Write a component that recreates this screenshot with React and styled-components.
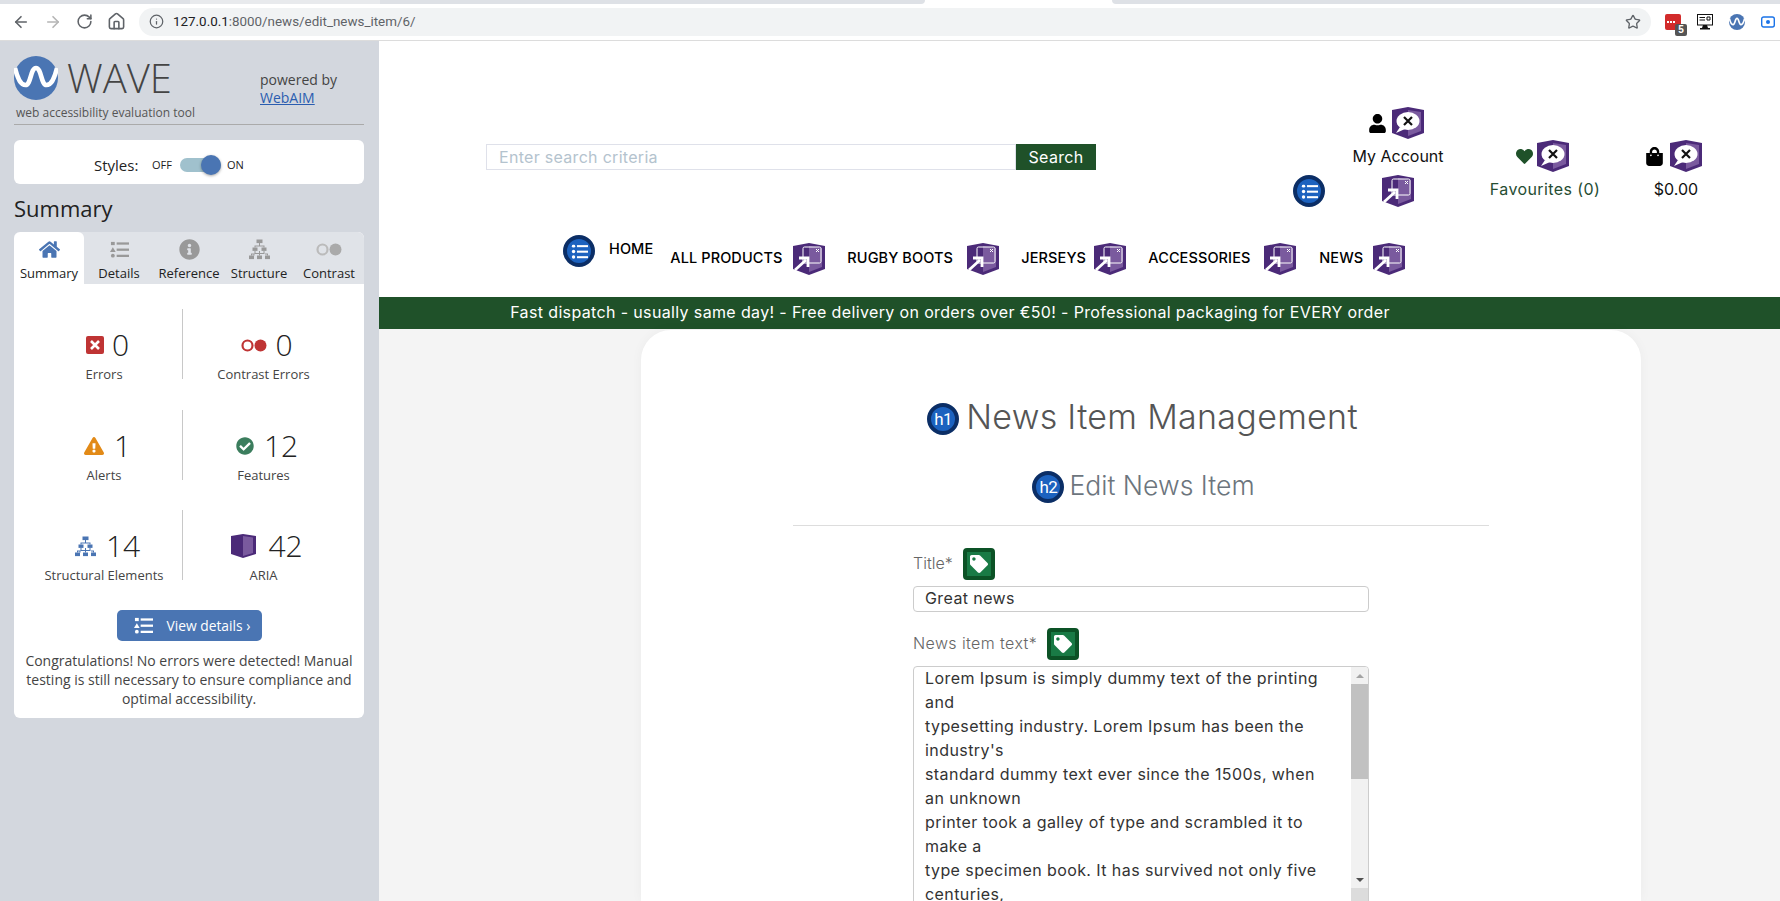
import React from 'react';
import styled, { createGlobalStyle } from 'styled-components';
import { ArrowLeft, ArrowRight, RotateCw, Home, Info, Star } from 'lucide-react';
import { FaHome, FaInfoCircle, FaCheckCircle, FaExclamationTriangle, FaUser, FaHeart, FaShoppingBag, FaTag } from 'react-icons/fa';

const SITE_FONT = `Inter, "Open Sans", sans-serif`;
const WAVE_FONT = `"Open Sans", "Noto Sans", sans-serif`;

const GlobalStyle = createGlobalStyle`
  html, body { margin: 0; padding: 0; height: 100%; overflow: hidden; background: #fff; }
  * { box-sizing: border-box; }
`;

const Root = styled.div`
  height: 901px;
  width: 1780px;
  overflow: hidden;
  display: flex;
  flex-direction: column;
`;

/* browser chrome */
const TabStrip = styled.div`
  height: 4px;
  display: flex;
  flex: none;
`;
const TabPiece = styled.div`
  height: 4px;
  width: ${p => p.$w}px;
  flex: ${p => (p.$grow ? 1 : 'none')};
  background: ${p => p.$bg};
  border-radius: ${p => p.$radius || '0'};
`;
const Toolbar = styled.div`
  height: 37px;
  flex: none;
  display: flex;
  align-items: center;
  padding: 4px 0 5px 12px;
  border-bottom: 1px solid #dcdcdc;
  background: #fff;
`;
const NavIcons = styled.div`
  display: flex;
  align-items: center;
  gap: 14px;
  color: #5f6368;
  width: 127px;
  flex: none;
`;
const AddressBar = styled.div`
  width: 1512px;
  height: 28px;
  flex: none;
  background: #f1f3f4;
  border-radius: 14px;
  display: flex;
  align-items: center;
  padding: 0 10px 0 10px;
  color: #5f6368;
`;
const Url = styled.span`
  font: 13.4px Roboto, sans-serif;
  margin-left: 9px;
  color: #5f6368;
  flex: 1;
  b { font-weight: 400; color: #202124; }
`;
const Extensions = styled.div`
  display: flex;
  align-items: center;
  margin-left: 14px;
  gap: 16px;
`;
const RedExt = styled.div`
  width: 16px;
  height: 16px;
  background: #d22b2b;
  border-radius: 2px;
  position: relative;
  display: flex;
  gap: 1px;
  align-items: center;
  padding-left: 2px;
  i { width: 2px; height: 2px; background: #fff; display: block; }
`;
const ExtBadge = styled.span`
  position: absolute;
  left: 10px;
  top: 10px;
  width: 12px;
  height: 12px;
  background: #555;
  color: #fff;
  border-radius: 2px;
  font: bold 10px/12px "Liberation Sans", sans-serif;
  text-align: center;
`;

const Page = styled.div`
  flex: 1;
  display: flex;
  min-height: 0;
`;

/* WAVE sidebar */
const Sidebar = styled.aside`
  width: 379px;
  flex: none;
  background: #d3d7de;
  padding: 15px 15px 0 14px;
  font-family: ${WAVE_FONT};
  color: #444;
`;
const Brand = styled.div`
  display: flex;
  height: 69px;
  border-bottom: 1px solid #aaa;
`;
const LogoWrap = styled.div`
  width: 246px;
  flex: none;
`;
const LogoRow = styled.div`
  display: flex;
  align-items: center;
  gap: 9px;
  height: 44px;
`;
const LogoWord = styled.span`
  font: 300 40px/44px ${WAVE_FONT};
  color: #444;
`;
const Tagline = styled.div`
  font-size: 12px;
  line-height: 16px;
  margin: 5px 0 0 2px;
  color: #555;
  white-space: nowrap;
`;
const Powered = styled.div`
  font-size: 14px;
  line-height: 19px;
  padding-top: 14px;
  color: #444;
  a { color: #2a5db0; display: block; line-height: 18px; text-decoration: underline; }
`;
const StylesCard = styled.div`
  margin-top: 15px;
  height: 44px;
  background: #fff;
  border-radius: 6px;
  display: flex;
  align-items: center;
  padding: 5px 0 0 80px;
  color: #222;
`;
const StylesLabel = styled.span`
  font-size: 15px;
  width: 58px;
`;
const OnOff = styled.span`
  font-size: 11px;
`;
const Toggle = styled.div`
  width: 41px;
  height: 14px;
  margin: 0 6px 0 8px;
  border-radius: 7px;
  background: #a0c1cd;
  display: flex;
  align-items: center;
  justify-content: flex-end;
  &::after {
    content: '';
    width: 20px;
    height: 20px;
    flex: none;
    border-radius: 50%;
    background: #4a75b3;
    box-shadow: 0 1px 3px rgba(0, 0, 0, 0.35);
  }
`;
const SummaryTitle = styled.h2`
  margin: 9px 0 9px;
  font: 400 22px/30px ${WAVE_FONT};
  color: #222;
`;
const Panel = styled.div`
  border-radius: 6px;
  background: #fff;
  overflow: hidden;
`;
const Tabs = styled.div`
  display: grid;
  grid-template-columns: repeat(5, 70px);
  background: #e0e3e8;
  height: 52px;
`;
const Tab = styled.div`
  display: flex;
  flex-direction: column;
  align-items: center;
  background: ${p => (p.$active ? '#fff' : 'transparent')};
  border-radius: ${p => (p.$active ? '6px 6px 0 0' : '0')};
  color: ${p => (p.$active ? '#4a75b3' : '#999')};
  font-size: 13px;
  height: 52px;
`;
const TabIcon = styled.div`
  height: 33px;
  display: flex;
  align-items: center;
  justify-content: center;
  padding-top: 2px;
`;
const TabLabel = styled.span`
  color: #222;
  line-height: 16px;
  white-space: nowrap;
`;
const Stats = styled.div`
  display: grid;
  grid-template-columns: 168px 182px;
  padding: 25px 0 0;
  row-gap: 30.5px;
`;
const Stat = styled.div`
  height: 70px;
  display: flex;
  flex-direction: column;
  align-items: center;
  justify-content: flex-start;
  border-left: ${p => (p.$divided ? '1px solid #c8c8c8' : 'none')};
  padding: 17px ${p => (p.$divided ? 20 : 0)}px 0 ${p => (p.$divided ? 0 : 12)}px;
`;
const StatTop = styled.div`
  display: flex;
  align-items: center;
  gap: ${p => p.$gap || 8}px;
  height: 38px;
  margin-left: 7px;
`;
const StatNum = styled.span`
  font: 300 30px/38px ${WAVE_FONT};
  color: #222;
`;
const StatLabel = styled.div`
  font-size: 13px;
  line-height: 20px;
  color: #444;
  white-space: nowrap;
`;
const ViewRow = styled.div`
  display: flex;
  justify-content: center;
  margin-top: 30px;
`;
const ViewButton = styled.div`
  width: 145px;
  height: 31px;
  background: #4a75b3;
  border-radius: 5px;
  color: #fff;
  font-size: 13.8px;
  display: flex;
  align-items: center;
  gap: 14px;
  padding-left: 17px;
`;
const Congrats = styled.p`
  margin: 10px 0 0;
  padding: 0 8px 10px;
  font-size: 14px;
  line-height: 19px;
  text-align: center;
  color: #444;
`;

/* site */
const Main = styled.main`
  flex: 1;
  min-width: 0;
  display: flex;
  flex-direction: column;
  font-family: ${SITE_FONT};
  background: #f4f4f4;
`;
const Header = styled.header`
  height: 256px;
  flex: none;
  background: #fff;
  display: flex;
  flex-direction: column;
`;
const TopRow = styled.div`
  height: 194px;
  display: flex;
  padding: 66px 0 0 107px;
`;
const SearchForm = styled.div`
  display: flex;
  width: 610px;
  height: 26px;
  margin-top: 37px;
  margin-right: 197px;
  flex: none;
`;
const SearchInput = styled.div`
  width: 530px;
  border: 1px solid #dfe1ea;
  padding-left: 12px;
  font-size: 16px;
  letter-spacing: 0.3px;
  line-height: 24px;
  color: #b4c3ce;
`;
const SearchBtn = styled.div`
  width: 80px;
  background: #1f5129;
  color: #fff;
  font-size: 16px;
  letter-spacing: 0.3px;
  line-height: 26px;
  text-align: center;
`;
const AccountCol = styled.div`
  width: 210px;
  flex: none;
  display: flex;
  flex-direction: column;
  align-items: center;
`;
const IconRow = styled.div`
  display: flex;
  align-items: center;
  gap: ${p => p.$gap}px;
  height: 32px;
  margin-right: ${p => p.$mr}px;
`;
const HeadText = styled.div`
  font-size: 16px;
  letter-spacing: ${p => p.$spacing || 0}px;
  line-height: 21px;
  margin-top: 7px;
  color: ${p => p.$color || '#111'};
  white-space: nowrap;
`;
const AccountBottom = styled.div`
  width: 100%;
  display: grid;
  grid-template-columns: 1fr 32px 1fr;
  margin-top: 8px;
`;
const MiniCol = styled.div`
  width: ${p => p.$w}px;
  margin-left: ${p => p.$ml || 0}px;
  padding-top: 33px;
  display: flex;
  flex-direction: column;
  align-items: center;
  flex: none;
`;
const NavRow = styled.nav`
  display: flex;
  align-items: flex-start;
  padding-left: 184px;
`;
const NavItem = styled.div`
  display: flex;
  align-items: center;
  margin-top: ${p => (p.$raised ? 0 : 8)}px;
  margin-right: ${p => p.$mr}px;
  height: 32px;
`;
const NavLabel = styled.span`
  font-size: 14.5px;
  font-weight: 500;
  color: #000;
  white-space: nowrap;
  width: ${p => (p.$w ? `${p.$w}px` : 'auto')};
  margin-left: ${p => p.$ml || 0}px;
  padding-bottom: ${p => (p.$ml ? 6 : 4)}px;
  letter-spacing: 0.1px;
`;
const Banner = styled.div`
  height: 32px;
  flex: none;
  background: #1f5129;
  color: #fff;
  font-size: 16px;
  letter-spacing: 0.36px;
  line-height: 30px;
  text-align: center;
  padding-right: 259px;
`;
const Content = styled.div`
  flex: 1;
  display: flex;
  min-height: 0;
  padding: 1px 0 0 262px;
`;
const Card = styled.section`
  width: 1000px;
  flex: none;
  background: #fff;
  border-radius: 30px 30px 0 0;
  box-shadow: 0 0 12px rgba(0, 0, 0, 0.04);
  padding-top: 73px;
  display: flex;
  flex-direction: column;
  align-items: center;
`;
const Heading = styled.div`
  display: flex;
  align-items: center;
  gap: ${p => p.$gap}px;
  height: 32px;
  color: ${p => p.$color};
  font-weight: 300;
  font-size: ${p => p.$size}px;
  letter-spacing: ${p => p.$spacing || 0}px;
  margin-top: ${p => p.$mt || 0}px;
  margin-left: ${p => p.$ml || 0}px;
  white-space: nowrap;
`;
const HeadingText = styled.span`
  padding-bottom: ${p => p.$lift}px;
`;
const CardRule = styled.hr`
  width: 696px;
  margin: 22px 0 0;
  border: 0;
  border-top: 1px solid #ddd;
  flex: none;
`;
const Form = styled.div`
  width: 456px;
  margin-top: 22px;
  display: flex;
  flex-direction: column;
  align-self: flex-start;
  margin-left: 272px;
`;
const LabelRow = styled.div`
  display: flex;
  align-items: center;
  gap: 10px;
  height: 32px;
  font-size: 16px;
  letter-spacing: ${p => p.$spacing || 0}px;
  color: #666;
  font-weight: 300;
`;
const LabelText = styled.span`
  padding-bottom: 2px;
`;
const TitleInput = styled.div`
  height: 26px;
  margin: 6px 0 16px;
  border: 1px solid #ccc;
  border-radius: 4px;
  padding-left: 11px;
  font-size: 16px;
  letter-spacing: 0.4px;
  line-height: 22px;
  color: #333;
`;
const TextBox = styled.div`
  height: 240px;
  margin-top: 6px;
  border: 1px solid #ccc;
  border-radius: 4px;
  display: flex;
  overflow: hidden;
  flex: none;
`;
const TextBody = styled.div`
  flex: 1;
  margin-top: -1px;
  padding-left: 11px;
  font-size: 16px;
  letter-spacing: 0.42px;
  line-height: 24px;
  color: #333;
  white-space: nowrap;
`;
const Scrollbar = styled.div`
  width: 17px;
  flex: none;
  background: #f1f1f1;
  display: flex;
  flex-direction: column;
  align-items: center;
`;
const ScrollArrow = styled.div`
  height: 17px;
  flex: none;
  width: 100%;
  display: flex;
  align-items: center;
  justify-content: center;
  &::after {
    content: '';
    border-left: 4px solid transparent;
    border-right: 4px solid transparent;
    border-${p => (p.$up ? 'bottom' : 'top')}: 4px solid ${p => (p.$up ? '#a3a3a3' : '#505050')};
  }
`;
const ScrollThumb = styled.div`
  width: 100%;
  height: 95px;
  flex: none;
  background: #c1c1c1;
`;
const ScrollGap = styled.div`
  flex: 1;
`;
const ResizeCorner = styled.div`
  height: 17px;
  width: 100%;
  flex: none;
  background: #dcdcdc;
`;

/* badges */
const RoundBadge = styled.div`
  width: 32px;
  height: 32px;
  border-radius: 50%;
  background: #1c62bf;
  border: 4px solid #0b2e66;
  flex: none;
  display: flex;
  align-items: center;
  justify-content: center;
  color: #fff;
  font: 400 17px/1 Roboto, sans-serif;
  letter-spacing: -0.5px;
`;
const TagBadge = styled.div`
  width: 32px;
  height: 32px;
  border-radius: 4px;
  background: #197a45;
  border: 4px solid #0c5226;
  flex: none;
  display: flex;
  align-items: center;
  justify-content: center;
  color: #fff;
`;

const AriaBadge = ({ kind }) => (
  <svg width="32" height="32" viewBox="0 0 32 32" style={{ flex: 'none' }}>
    <path d="M0 3 L16 0 L32 3 L32 26 L16 32 L0 26 Z" fill="#4b2a78" />
    <path d="M16 3 L29 5 L29 24 L16 29 Z" fill="#7a5a9e" />
    {kind === 'label' ? (
      <>
        <ellipse cx="16" cy="14" rx="11.5" ry="9" fill="#fff" />
        <path d="M8 20 L4 26 L13 22 Z" fill="#fff" />
        <path d="M12 10 L20 18 M20 10 L12 18" stroke="#111" strokeWidth="2.2" />
      </>
    ) : (
      <>
        <rect x="10" y="4" width="18" height="16" rx="1.5" fill="none" stroke="#fff" strokeWidth="1" />
        <path d="M23 6 L26 9 M26 6 L23 9" stroke="#fff" strokeWidth="1" />
        <path d="M2 27 L13 17 M6 15 H15 V24" fill="none" stroke="#fff" strokeWidth="2.8" />
      </>
    )}
  </svg>
);

const ListGlyph = ({ size = 20, color = '#fff', triangle }) => (
  <svg width={size} height={size} viewBox="0 0 20 20" fill={color}>
    {triangle ? <path d="M3 7.5 L6 12.5 H0 Z" /> : <circle cx="3" cy="10" r="2" />}
    <rect x="1" y="2" width="4" height="3.4" rx={triangle ? 0 : 1.7} />
    <circle cx="3" cy="16.5" r="2" />
    <rect x="7" y="2.5" width="13" height="2.4" />
    <rect x="7" y="9" width="13" height="2.4" />
    <rect x="7" y="15.5" width="13" height="2.4" />
  </svg>
);

const TreeGlyph = ({ color, size = 21 }) => (
  <svg width={size} height={size} viewBox="0 0 21 20" fill={color}>
    <rect x="7.5" y="0" width="6" height="3.6" />
    <rect x="3.5" y="8" width="5" height="3.4" />
    <rect x="12.5" y="8" width="5" height="3.4" />
    <rect x="0" y="16" width="5" height="3.6" />
    <rect x="8" y="16" width="5" height="3.6" />
    <rect x="16" y="16" width="5" height="3.6" />
    <path d="M10 3.6 h1 V6 H15.5 V8 h-1 V7 H6.5 V8 h-1 V6 H10Z M5.5 11.4 h1 V13.5 H10 V11.4 h1 V13.5 H14.5 V11.4 h1 V14.5 H11 V16 h-1 V14.5 H5.5 V16 h-1 V14 H5.5Z M2 14 h3 v1 H3 v1 H2Z M16 14 h3 v2 h-1 v-1 h-2Z" />
  </svg>
);

const ContrastGlyph = ({ ring, fill, w = 26 }) => (
  <svg width={w} height={w * 0.5} viewBox="0 0 26 13">
    <circle cx="6.5" cy="6.5" r="5" fill="none" stroke={ring} strokeWidth="2.2" />
    <circle cx="19.5" cy="6.5" r="6" fill={fill} />
  </svg>
);

const WaveLogo = ({ size = 44 }) => (
  <svg width={size} height={size} viewBox="0 0 44 44" style={{ flex: 'none' }}>
    <circle cx="22" cy="22" r="22" fill="#4a75b3" />
    <path
      d="M1 12 C4 24 7 29 11.5 29 C17 29 16.5 12 22 12 C27.5 12 27 29 32.5 29 C37 29 40 24 43 12"
      fill="none"
      stroke="#fff"
      strokeWidth="4.6"
    />
  </svg>
);

const loremLines = [
  'Lorem Ipsum is simply dummy text of the printing',
  'and',
  'typesetting industry. Lorem Ipsum has been the',
  "industry's",
  'standard dummy text ever since the 1500s, when',
  'an unknown',
  'printer took a galley of type and scrambled it to',
  'make a',
  'type specimen book. It has survived not only five',
  'centuries,',
];

const navItems = [
  { label: 'ALL PRODUCTS', w: 123, mr: 22 },
  { label: 'RUGBY BOOTS', w: 120, mr: 22 },
  { label: 'JERSEYS', w: 73, mr: 22 },
  { label: 'ACCESSORIES', w: 116, mr: 23 },
  { label: 'NEWS', w: 54, mr: 0 },
];

const tabs = [
  { label: 'Summary', icon: <FaHome size={21} />, active: true },
  { label: 'Details', icon: <ListGlyph size={19} color="#999" triangle /> },
  { label: 'Reference', icon: <FaInfoCircle size={21} /> },
  { label: 'Structure', icon: <TreeGlyph color="#999" /> },
  { label: 'Contrast', icon: <ContrastGlyph ring="#bbb" fill="#aaa" /> },
];

function App() {
  return (
    <Root>
      <GlobalStyle />
      <TabStrip>
        <TabPiece $w={190} $bg="#dee1e6" />
        <TabPiece $w={190} $bg="#e8eaed" />
        <TabPiece $w={545} $bg="#dee1e6" $radius="0 0 6px 0" />
        <TabPiece $w={187} $bg="#fff" />
        <TabPiece $grow $bg="#dee1e6" $radius="0 0 0 6px" />
      </TabStrip>
      <Toolbar>
        <NavIcons>
          <ArrowLeft size={18} strokeWidth={2.2} />
          <ArrowRight size={18} strokeWidth={2.2} color="#b5b5b5" />
          <RotateCw size={17} strokeWidth={2.2} />
          <Home size={19} strokeWidth={2} />
        </NavIcons>
        <AddressBar>
          <Info size={15} />
          <Url><b>127.0.0.1</b>:8000/news/edit_news_item/6/</Url>
          <Star size={16} />
        </AddressBar>
        <Extensions>
          <RedExt><i /><i /><i /><ExtBadge>5</ExtBadge></RedExt>
          <svg width="16" height="16" viewBox="0 0 16 16">
            <rect x="0.5" y="0.5" width="15" height="10.5" fill="#fff" stroke="#111" />
            <path d="M2.5 3.5 H8 M2.5 6 H8 M10 3 H13 V6 H10Z" stroke="#111" fill="none" />
            <path d="M6 11 H10 L11 14 H13 V15.5 H3 V14 H5Z" fill="#111" />
          </svg>
          <WaveLogo size={16} />
          <svg width="14" height="12" viewBox="0 0 14 12">
            <rect x="0.7" y="1" width="12.6" height="10" rx="2" fill="none" stroke="#1a73e8" strokeWidth="1.4" />
            <circle cx="7" cy="6" r="2" fill="#1a73e8" />
          </svg>
        </Extensions>
      </Toolbar>
      <Page>
        <Sidebar>
          <Brand>
            <LogoWrap>
              <LogoRow>
                <WaveLogo />
                <LogoWord>WAVE</LogoWord>
              </LogoRow>
              <Tagline>web accessibility evaluation tool</Tagline>
            </LogoWrap>
            <Powered>
              powered by
              <a href="#webaim">WebAIM</a>
            </Powered>
          </Brand>
          <StylesCard>
            <StylesLabel>Styles:</StylesLabel>
            <OnOff>OFF</OnOff>
            <Toggle />
            <OnOff>ON</OnOff>
          </StylesCard>
          <SummaryTitle>Summary</SummaryTitle>
          <Panel>
            <Tabs>
              {tabs.map(t => (
                <Tab key={t.label} $active={t.active}>
                  <TabIcon>{t.icon}</TabIcon>
                  <TabLabel>{t.label}</TabLabel>
                </Tab>
              ))}
            </Tabs>
            <Stats>
              <Stat>
                <StatTop>
                  <svg width="18" height="18" viewBox="0 0 18 18">
                    <rect width="18" height="18" rx="2" fill="#bf3434" />
                    <path d="M5 5 L13 13 M13 5 L5 13" stroke="#fff" strokeWidth="2.6" />
                  </svg>
                  <StatNum>0</StatNum>
                </StatTop>
                <StatLabel>Errors</StatLabel>
              </Stat>
              <Stat $divided>
                <StatTop>
                  <ContrastGlyph ring="#bf3434" fill="#bf3434" />
                  <StatNum>0</StatNum>
                </StatTop>
                <StatLabel>Contrast Errors</StatLabel>
              </Stat>
              <Stat>
                <StatTop $gap={10}>
                  <FaExclamationTriangle size={20} color="#e28a17" />
                  <StatNum>1</StatNum>
                </StatTop>
                <StatLabel>Alerts</StatLabel>
              </Stat>
              <Stat $divided>
                <StatTop $gap={10}>
                  <FaCheckCircle size={18} color="#3b7d5d" />
                  <StatNum>12</StatNum>
                </StatTop>
                <StatLabel>Features</StatLabel>
              </Stat>
              <Stat>
                <StatTop $gap={10}>
                  <TreeGlyph color="#4a75b3" />
                  <StatNum>14</StatNum>
                </StatTop>
                <StatLabel>Structural Elements</StatLabel>
              </Stat>
              <Stat $divided>
                <StatTop $gap={12}>
                  <svg width="25" height="24" viewBox="0 0 25 24">
                    <path d="M0 2 L12 0 L25 2 L25 20 L12 24 L0 20 Z" fill="#4b2a78" />
                    <path d="M12 2 L22 3.5 L22 19 L12 22 Z" fill="#7a5a9e" />
                  </svg>
                  <StatNum>42</StatNum>
                </StatTop>
                <StatLabel>ARIA</StatLabel>
              </Stat>
            </Stats>
            <ViewRow>
              <ViewButton>
                <ListGlyph size={19} triangle />
                View details ›
              </ViewButton>
            </ViewRow>
            <Congrats>
              Congratulations! No errors were detected! Manual testing is still necessary to ensure compliance and optimal accessibility.
            </Congrats>
          </Panel>
        </Sidebar>
        <Main>
          <Header>
            <TopRow>
              <SearchForm>
                <SearchInput>Enter search criteria</SearchInput>
                <SearchBtn>Search</SearchBtn>
              </SearchForm>
              <AccountCol>
                <IconRow $gap={5} $mr={4}>
                  <FaUser size={19} color="#000" />
                  <AriaBadge kind="label" />
                </IconRow>
                <HeadText>My Account</HeadText>
                <AccountBottom>
                  <RoundBadge><ListGlyph size={17} /></RoundBadge>
                  <AriaBadge kind="popup" />
                </AccountBottom>
              </AccountCol>
              <MiniCol $w={110} $ml={-13}>
                <IconRow $gap={4} $mr={5}>
                  <FaHeart size={17} color="#1f5129" />
                  <AriaBadge kind="label" />
                </IconRow>
                <HeadText $color="#264d33" $spacing={0.4}>Favourites (0)</HeadText>
              </MiniCol>
              <MiniCol $w={152}>
                <IconRow $gap={6} $mr={5}>
                  <FaShoppingBag size={19} color="#000" />
                  <AriaBadge kind="label" />
                </IconRow>
                <HeadText>$0.00</HeadText>
              </MiniCol>
            </TopRow>
            <NavRow>
              <NavItem $raised $mr={17}>
                <RoundBadge><ListGlyph size={17} /></RoundBadge>
                <NavLabel $ml={14}>HOME</NavLabel>
              </NavItem>
              {navItems.map(n => (
                <NavItem key={n.label} $mr={n.mr}>
                  <NavLabel $w={n.w}>{n.label}</NavLabel>
                  <AriaBadge kind="popup" />
                </NavItem>
              ))}
            </NavRow>
          </Header>
          <Banner>Fast dispatch - usually same day! - Free delivery on orders over €50! - Professional packaging for EVERY order</Banner>
          <Content>
            <Card>
              <Heading $color="#555" $size={34} $spacing={0.3} $gap={7} $ml={3}>
                <RoundBadge>h1</RoundBadge>
                <HeadingText $lift={6}>News Item Management</HeadingText>
              </Heading>
              <Heading $color="#6c757d" $size={26.6} $gap={5} $mt={36} $ml={5}>
                <RoundBadge>h2</RoundBadge>
                <HeadingText $lift={4}>Edit News Item</HeadingText>
              </Heading>
              <CardRule />
              <Form>
                <LabelRow>
                  <LabelText>Title*</LabelText>
                  <TagBadge><FaTag size={18} /></TagBadge>
                </LabelRow>
                <TitleInput>Great news</TitleInput>
                <LabelRow $spacing={0.4}>
                  <LabelText>News item text*</LabelText>
                  <TagBadge><FaTag size={18} /></TagBadge>
                </LabelRow>
                <TextBox>
                  <TextBody>
                    {loremLines.map(line => <div key={line}>{line}</div>)}
                  </TextBody>
                  <Scrollbar>
                    <ScrollArrow $up />
                    <ScrollThumb />
                    <ScrollGap />
                    <ScrollArrow />
                    <ResizeCorner />
                  </Scrollbar>
                </TextBox>
              </Form>
            </Card>
          </Content>
        </Main>
      </Page>
    </Root>
  );
}

export default App;
